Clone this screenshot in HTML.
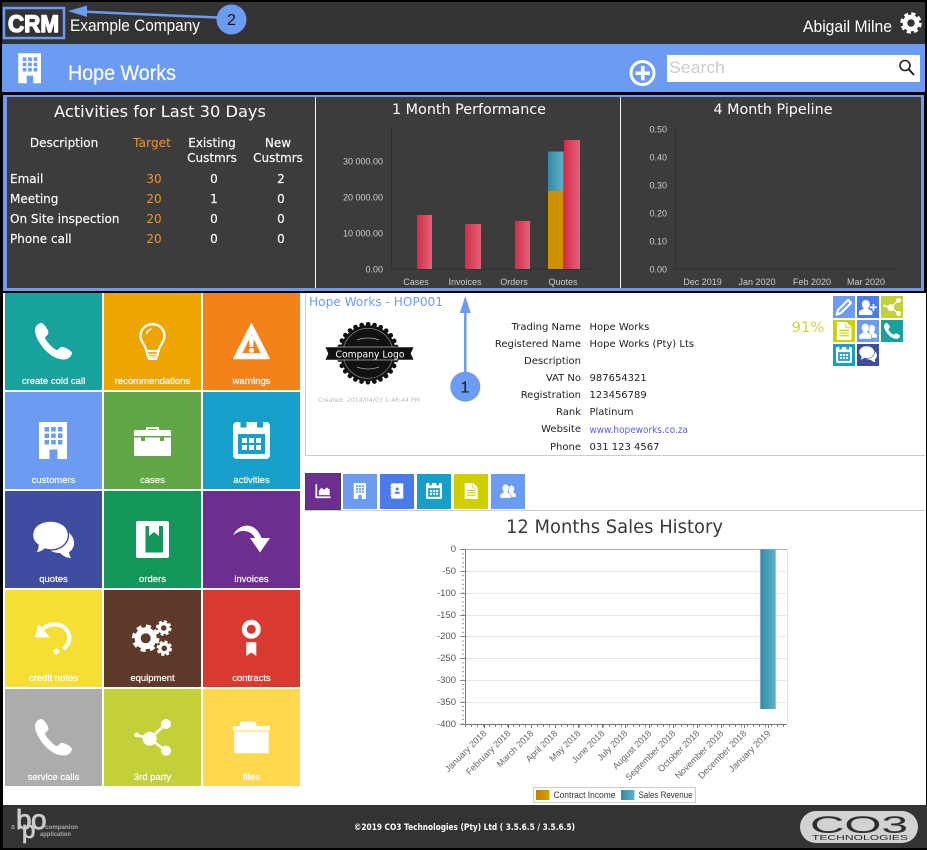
<!DOCTYPE html>
<html><head><meta charset="utf-8"><title>Hope Works</title>
<style>
html,body{margin:0;padding:0;background:#fff;width:927px;height:850px;overflow:hidden}
svg{display:block;position:absolute;left:0;top:0}
text{font-family:"Liberation Sans",sans-serif}
.d{font-family:"DejaVu Sans","Liberation Sans",sans-serif}
.w{fill:#fff}
.tl{font-size:9.5px;fill:#fff;text-anchor:middle;stroke:#fff;stroke-width:.2px}
.h{font-size:12px;fill:#fff;text-anchor:middle;font-family:"DejaVu Sans",sans-serif;stroke:#fff;stroke-width:.15px}
.c{font-size:9px;fill:#ccc}
.lb{font-size:10px;fill:#222;text-anchor:end;font-family:"DejaVu Sans",sans-serif}
.vl{font-size:10px;fill:#222;font-family:"DejaVu Sans",sans-serif}
.y{font-size:9.5px;fill:#555;text-anchor:end}
.m{font-size:9px;fill:#666;text-anchor:end}
</style></head><body>
<svg width="927" height="850" viewBox="0 0 927 850" xmlns="http://www.w3.org/2000/svg">
<defs>
<linearGradient id="r" x1="0" x2="1" y1="0" y2="0"><stop offset="0" stop-color="#d32c48"/><stop offset="1" stop-color="#e4637a"/></linearGradient>
<linearGradient id="t" x1="0" x2="1" y1="0" y2="0"><stop offset="0" stop-color="#338aa6"/><stop offset="1" stop-color="#5bb4c8"/></linearGradient>
<linearGradient id="g" x1="0" x2="1" y1="0" y2="0"><stop offset="0" stop-color="#bd8400"/><stop offset="1" stop-color="#dca000"/></linearGradient>

<symbol id="phone" viewBox="0 0 37 37" overflow="visible"><path fill="#fff" d="M6 0C3 .5 0 3 0 7c0 6 4 13 10 20 6 6 12 9.5 19 9.5 4 0 7.5-3 8-6.5 0-2-7-6-10-6-2 0-3.5 2.5-5 3-3 0-12-10-12-12.500 1-1.500 3.500-3 3.500-5C13.500 7 9 0 6 0Z"/></symbol>
<symbol id="bulb" viewBox="0 0 37 37" overflow="visible"><g fill="none" stroke="#fff" stroke-width="2.3"><path d="M18.5 1.2C11.5 1.2 6.5 6.5 6.5 13c0 6 4.5 8 6 15h12c1.500-7 6-9 6-15 0-6.500-5-11.800-12-11.800Z"/><path d="M13 28v3l2 5h7l2-5v-3" stroke-width="2"/><path d="M13.5 31.5h10M15 34h7" stroke-width="1.5"/><path d="M12.5 11c.5-2.500 2.500-4.500 5-5" stroke-width="1.5"/></g></symbol>
<symbol id="warn" viewBox="0 0 37 37" overflow="visible"><path fill="#fff" fill-rule="evenodd" stroke="#fff" stroke-linejoin="round" stroke-width="1.5" d="M18.5 1 36 35.500H1ZM18.500 10 8 31h21Z"/><path fill="#fff" d="M16 13h5l-.8 11h-3.400Z"/><circle cx="18.5" cy="27.500" r="2.400" fill="#fff"/></symbol>
<symbol id="bldg" viewBox="0 0 37 37" overflow="visible"><path fill="#fff" d="M4 0h28v37H22.5V27.500h-8V37H4Z"/><g fill="currentColor"><path d="M9.5 5h4.500v4.500H9.500zM16.200 5h4.500v4.500h-4.500zM23 5h4.500v4.500H23zM9.500 11.500h4.500V16H9.500zM16.200 11.500h4.500V16h-4.500zM23 11.500h4.500V16H23zM9.500 18h4.500v4.500H9.500zM16.200 18h4.500v4.500h-4.500zM23 18h4.500v4.500H23z"/></g></symbol>
<symbol id="case" viewBox="0 0 37 37" overflow="visible"><path fill="none" stroke="#fff" stroke-width="2" d="M13 9V6h11v3"/><rect y="8" width="37" height="26" rx="1.5" fill="#fff"/><path fill="currentColor" d="M0 14h37v1.500H30v3.500h-4v-3.500H11V19H7v-3.500H0Z"/></symbol>
<symbol id="cal" viewBox="0 0 37 37" overflow="visible"><rect width="37" height="37" rx="4" fill="#fff"/><g fill="currentColor"><rect x="7.5" y="0" width="6" height="5.5"/><rect x="24" y="0" width="6" height="5.5"/><rect x="5" y="12" width="27" height="20"/></g><g fill="#fff"><rect x="9" y="16" width="5" height="5"/><rect x="16" y="16" width="5" height="5"/><rect x="23" y="16" width="5" height="5"/><rect x="9" y="23" width="5" height="5"/><rect x="16" y="23" width="5" height="5"/><rect x="23" y="23" width="5" height="5"/></g></symbol>
<symbol id="chat" viewBox="0 0 37 37" overflow="visible"><path fill="#fff" d="M26 8C35 10 40 17 39 24 38 28 36 30 34 31 34 33 35 35 36 37 31 37 27 34 25 32 21 32 18 31 16 30Z"/><path fill="#fff" stroke="currentColor" stroke-width="1.4" d="M15.5 0C5 0-2.500 6-2.500 14-2.500 19 0 22 3 24 3 27 2 30 0 32 4 32 8 30 10 28 12 28.500 14 29 16 29 26 29 33.500 22 33.500 14 33.500 6 26 0 15.500 0Z"/></symbol>
<symbol id="book" viewBox="0 0 37 37" overflow="visible"><rect x="2" width="33" height="37" rx="2" fill="#fff"/><rect x="11.5" y="5" width="17.5" height="26.5" fill="currentColor"/><path fill="#fff" d="M15 5h10v10l-5-4-5 4Z"/></symbol>
<symbol id="arr" viewBox="0 0 37 37" overflow="visible"><path fill="#fff" d="M0 14.500C5 3 22-1 28.500 17H37L27 31.500 17 17h5C19 10.500 9 6 0 14.500Z"/></symbol>
<symbol id="undo" viewBox="0 0 37 37" overflow="visible"><path fill="none" stroke="#fff" stroke-width="4" d="M8 9c7-7 20-6 25 3 3 7 1 13-5 17"/><path fill="#fff" d="M3.5 4 15 17.500H0Z"/><path fill="#fff" d="M21.5 28 25 31.500 21.500 35 18 31.500Z"/></symbol>
<symbol id="gear" viewBox="0 0 37 37" overflow="visible"><circle cx="11.7" cy="18.3" r="11" fill="#fff"/><circle cx="11.7" cy="18.3" r="12" fill="none" stroke="#fff" stroke-width="3.5" stroke-dasharray="5 4.4"/><circle cx="11.7" cy="18.3" r="5" fill="currentColor"/><circle cx="29.7" cy="8" r="6" fill="#fff"/><circle cx="29.7" cy="8" r="6.5" fill="none" stroke="#fff" stroke-width="2.5" stroke-dasharray="3 2.1"/><circle cx="29.7" cy="8" r="2.8" fill="currentColor"/><circle cx="30.3" cy="28.3" r="6" fill="#fff"/><circle cx="30.3" cy="28.3" r="6.5" fill="none" stroke="#fff" stroke-width="2.5" stroke-dasharray="3 2.1"/><circle cx="30.3" cy="28.3" r="2.8" fill="currentColor"/></symbol>
<symbol id="rib" viewBox="0 0 37 37" overflow="visible"><circle cx="18.3" cy="9.3" r="7" fill="none" stroke="#fff" stroke-width="5"/><path fill="#fff" d="M13.3 22.3h10V36l-5-3.500-5 3.500Z"/></symbol>
<symbol id="share" viewBox="0 0 37 37" overflow="visible"><path stroke="#fff" stroke-width="2.5" fill="none" d="M2.7 16 15.7 19.7 32 5M15.7 19.7 32 31.7"/><circle cx="15.7" cy="19.7" r="7" fill="#fff"/><circle cx="32" cy="5" r="5" fill="#fff"/><circle cx="32" cy="31.7" r="5" fill="#fff"/><circle cx="2.7" cy="16" r="2.5" fill="#fff"/></symbol>
<symbol id="fold" viewBox="0 0 37 37" overflow="visible"><path fill="#fff" d="M7 2.7h15l2 4.300h13v4.500H0V7h7ZM1.300 12.500h34.400V34.300H1.300Z"/></symbol>
<symbol id="doc" viewBox="0 0 37 37" overflow="visible"><path fill="#fff" d="M4 0h20l10 10v27H4Z"/><path fill="currentColor" d="M23 1v10h10v1.500H21.500V1ZM9 16h20v2.500H9zM9 21.500h20V24H9zM9 27h20v2.500H9z"/></symbol>
<symbol id="users" viewBox="0 0 37 37" overflow="visible"><path fill="#fff" d="M26 6c4 0 7 3 7 7.500 0 3-1 5.500-3 7 0 2 6 3.500 7 6.500v5H26c0-5-3-7.500-6-9 1-1.500 1-3 1-4-.5-5 0-13 5-13Z"/><path fill="#fff" stroke="currentColor" stroke-width="1.2" d="M13 3c5 0 8 4 8 9 0 4-1.500 6.500-3.500 8 0 2.500 7 4 8 7.500V35H0v-7.500C1 24 8.500 22.500 8.500 20 6.500 18.500 5 16 5 12c0-5 3-9 8-9Z"/></symbol>
<symbol id="add" viewBox="0 0 37 37" overflow="visible"><path fill="#fff" d="M14 4c5 0 8 4 8 9 0 4-1.500 6.500-3.500 8 0 2.500 8 3.500 9 7.500V35H0v-6.500C1 24.500 9.500 23.500 9.500 21 7.500 19.500 6 17 6 13c0-5 3-9 8-9Z"/><path fill="#fff" d="M28 12h3.500v5.500H37V21h-5.500v5.500H28V21h-5.500v-3.500H28Z"/></symbol>
<symbol id="pen" viewBox="0 0 37 37" overflow="visible"><path fill="none" stroke="#fff" stroke-width="4.5" stroke-linejoin="round" d="M27 4 33 10 12 31 3.500 34 6 25Z"/></symbol>
<symbol id="area" viewBox="0 0 37 37" overflow="visible"><path fill="none" stroke="#fff" stroke-width="4" d="M3 3V33H36"/><path fill="#fff" d="M9 28V18l6-7 6 5 6-6 7 5v13Z"/></symbol>
<symbol id="abook" viewBox="0 0 37 37" overflow="visible"><rect x="5" y="1" width="28" height="35" rx="2" fill="#fff"/><path d="M3 7h5M3 14h5M3 21h5M3 28h5" stroke="#fff" stroke-width="2.5"/><circle cx="19" cy="14" r="3.5" fill="currentColor"/><path fill="currentColor" d="M13 25c0-4 2-5 6-5s6 1 6 5Z"/></symbol>
</defs>

<!-- base -->
<rect width="927" height="850" fill="#000"/>
<rect x="3" y="293" width="923" height="512" fill="#fff"/>
<rect x="2" y="2" width="923" height="42" fill="#333"/>
<rect x="2" y="44" width="923" height="48" fill="#6c9bf2"/>
<rect x="3" y="95" width="921" height="196" fill="#6c9bf2"/>
<rect x="7" y="97" width="914" height="191" fill="#3c3c3c"/>
<rect x="315" y="97" width="1" height="191" fill="#f5f5f5"/>
<rect x="620" y="97" width="1" height="191" fill="#f5f5f5"/>
<rect x="3" y="805" width="924" height="43" fill="#333"/>

<!-- header -->
<text x="8" y="32" font-size="24" font-weight="bold" fill="#fff" stroke="#fff" stroke-width="1.4" stroke-linejoin="round" textLength="51" lengthAdjust="spacingAndGlyphs">CRM</text>
<rect x="4" y="8" width="60" height="30" fill="none" stroke="#6c9bf2" stroke-width="2.5"/>
<text x="70" y="31" font-size="17" class="w" textLength="130" lengthAdjust="spacingAndGlyphs">Example Company</text>
<text x="803" y="32" font-size="17" class="w" textLength="89" lengthAdjust="spacingAndGlyphs">Abigail Milne</text>
<circle cx="911" cy="23" r="6" fill="none" stroke="#fff" stroke-width="4.6"/>
<circle cx="911" cy="23" r="9" fill="none" stroke="#fff" stroke-width="3.4" stroke-dasharray="4 3.07"/>

<use href="#bldg" x="15" y="53.3" width="30" height="30" color="#6c9bf2"/>
<text x="68" y="80" font-size="21" class="w" stroke="#fff" stroke-width=".2" textLength="108" lengthAdjust="spacingAndGlyphs">Hope Works</text>
<circle cx="642.5" cy="73" r="11.5" fill="none" stroke="#fff" stroke-width="3"/>
<path d="M641 66h3.500v5.500H650V75h-5.500v5.500H641V75h-5.500v-3.500H641Z" fill="#fff"/>
<rect x="667" y="55" width="253" height="27" fill="#fff"/>
<text x="669" y="73" font-size="17" fill="#ccc" textLength="56" lengthAdjust="spacingAndGlyphs">Search</text>
<circle cx="905" cy="65.5" r="5" fill="none" stroke="#222" stroke-width="1.6"/>
<path d="M908.5 69 914 75" stroke="#222" stroke-width="2"/>

<!-- activities -->
<text x="160" y="117" font-size="16" fill="#fff" text-anchor="middle" class="d" textLength="212" lengthAdjust="spacingAndGlyphs">Activities for Last 30 Days</text>
<text x="64" y="147" class="h">Description</text>
<text x="152" y="147" class="h" style="fill:#f7931e;stroke:none" textLength="38" lengthAdjust="spacingAndGlyphs">Target</text>
<text x="212" y="147" class="h">Existing</text><text x="212" y="162" class="h">Custmrs</text>
<text x="278" y="147" class="h">New</text><text x="278" y="162" class="h">Custmrs</text>
<text x="10" y="183" class="h" style="text-anchor:start">Email</text>
<text x="10" y="203" class="h" style="text-anchor:start">Meeting</text>
<text x="10" y="223" class="h" style="text-anchor:start">On Site inspection</text>
<text x="10" y="243" class="h" style="text-anchor:start">Phone call</text>
<text x="154" y="183" class="h" style="fill:#f7931e;stroke:none">30</text><text x="214" y="183" class="h">0</text><text x="281" y="183" class="h">2</text>
<text x="154" y="203" class="h" style="fill:#f7931e;stroke:none">20</text><text x="214" y="203" class="h">1</text><text x="281" y="203" class="h">0</text>
<text x="154" y="223" class="h" style="fill:#f7931e;stroke:none">20</text><text x="214" y="223" class="h">0</text><text x="281" y="223" class="h">0</text>
<text x="154" y="243" class="h" style="fill:#f7931e;stroke:none">20</text><text x="214" y="243" class="h">0</text><text x="281" y="243" class="h">0</text>

<!-- 1 month -->
<text x="469" y="114" font-size="14.5" fill="#fff" text-anchor="middle" class="d" textLength="154" lengthAdjust="spacingAndGlyphs">1 Month Performance</text>
<path d="M391.5 161.500H590M391.500 197H590M391.500 233H590" stroke="#373737" fill="none"/>
<path d="M391.5 128V269H590" stroke="#2e2e2e" fill="none"/>
<text x="383" y="164.500" class="c" text-anchor="end">30 000.00</text><text x="383" y="200.500" class="c" text-anchor="end">20 000.00</text><text x="383" y="236.500" class="c" text-anchor="end">10 000.00</text><text x="383" y="272.500" class="c" text-anchor="end">0.00</text>
<rect x="417" y="215" width="15" height="54" fill="url(#r)"/>
<rect x="465" y="224" width="16" height="45" fill="url(#r)"/>
<rect x="515" y="221" width="15" height="48" fill="url(#r)"/>
<rect x="548" y="191" width="15.5" height="78" fill="#cc9200"/>
<rect x="548" y="151.5" width="15.5" height="39.5" fill="url(#t)"/>
<rect x="564" y="140" width="16" height="129" fill="url(#r)"/>
<text x="416" y="285" class="c" text-anchor="middle">Cases</text><text x="465" y="285" class="c" text-anchor="middle">Invoices</text><text x="514" y="285" class="c" text-anchor="middle">Orders</text><text x="563" y="285" class="c" text-anchor="middle">Quotes</text>

<!-- 4 month -->
<text x="773" y="114" font-size="14.5" fill="#fff" text-anchor="middle" class="d" textLength="119" lengthAdjust="spacingAndGlyphs">4 Month Pipeline</text>
<path d="M675.5 129H889M675.500 157H889M675.500 185H889M675.500 213H889M675.500 241H889" stroke="#373737" fill="none"/>
<path d="M675.5 129V269H895" stroke="#2e2e2e" fill="none"/>
<text x="667" y="132.500" class="c" text-anchor="end">0.50</text><text x="667" y="188.500" class="c" text-anchor="end">0.30</text><text x="667" y="160.500" class="c" text-anchor="end">0.40</text><text x="667" y="216.500" class="c" text-anchor="end">0.20</text><text x="667" y="244.500" class="c" text-anchor="end">0.10</text><text x="667" y="272.500" class="c" text-anchor="end">0.00</text>
<text x="702.5" y="285" class="c" text-anchor="middle">Dec 2019</text><text x="757" y="285" class="c" text-anchor="middle">Jan 2020</text><text x="812" y="285" class="c" text-anchor="middle">Feb 2020</text><text x="866" y="285" class="c" text-anchor="middle">Mar 2020</text>

<!-- tiles -->
<rect x="5" y="293" width="97" height="97" fill="#17a29e"/><rect x="104" y="293" width="97" height="97" fill="#eda600"/><rect x="203" y="293" width="97" height="97" fill="#f2831b"/>
<rect x="5" y="392" width="97" height="97" fill="#6c9bf2"/><rect x="104" y="392" width="97" height="97" fill="#62a745"/><rect x="203" y="392" width="97" height="97" fill="#179fc9"/>
<rect x="5" y="491" width="97" height="97" fill="#3e4d9f"/><rect x="104" y="491" width="97" height="97" fill="#12965a"/><rect x="203" y="491" width="97" height="97" fill="#6c2f91"/>
<rect x="5" y="590" width="97" height="97" fill="#f6df35"/><rect x="104" y="590" width="97" height="97" fill="#5f3a2a"/><rect x="203" y="590" width="97" height="97" fill="#d93a30"/>
<rect x="5" y="689" width="97" height="97" fill="#acacac"/><rect x="104" y="689" width="97" height="97" fill="#c3d03a"/><rect x="203" y="689" width="97" height="97" fill="#ffd84d"/>

<use href="#phone" x="35" y="323" width="37" height="37"/>
<use href="#bulb" x="134" y="323" width="37" height="37"/>
<use href="#warn" x="233" y="323" width="37" height="37" color="#f2831b"/>
<use href="#bldg" x="35" y="422" width="37" height="37" color="#6c9bf2"/>
<use href="#case" x="134" y="422" width="37" height="37" color="#62a745"/>
<use href="#cal" x="233" y="422" width="37" height="37" color="#179fc9"/>
<use href="#chat" x="35" y="521" width="37" height="37" color="#3e4d9f"/>
<use href="#book" x="134" y="521" width="37" height="37" color="#12965a"/>
<use href="#arr" x="233" y="521" width="37" height="37"/>
<use href="#undo" x="35" y="620" width="37" height="37"/>
<use href="#gear" x="134" y="620" width="37" height="37" color="#5f3a2a"/>
<use href="#rib" x="233" y="620" width="37" height="37"/>
<use href="#phone" x="35" y="719" width="37" height="37"/>
<use href="#share" x="134" y="719" width="37" height="37"/>
<use href="#fold" x="233" y="719" width="37" height="37"/>

<text x="53.5" y="384" class="tl">create cold call</text><text x="152.5" y="384" class="tl">recommendations</text><text x="251.5" y="384" class="tl">warnings</text>
<text x="53.5" y="483" class="tl">customers</text><text x="152.5" y="483" class="tl">cases</text><text x="251.5" y="483" class="tl">activities</text>
<text x="53.5" y="582" class="tl">quotes</text><text x="152.5" y="582" class="tl">orders</text><text x="251.5" y="582" class="tl">invoices</text>
<text x="53.5" y="681" class="tl">credit notes</text><text x="152.5" y="681" class="tl">equipment</text><text x="251.5" y="681" class="tl">contracts</text>
<text x="53.5" y="780" class="tl">service calls</text><text x="152.5" y="780" class="tl">3rd party</text><text x="251.5" y="780" class="tl">files</text>

<!-- card -->
<path d="M305.5 293V455.500H925" fill="none" stroke="#ccc"/>
<text x="309" y="306" font-size="12" fill="#6c9bf2" class="d" textLength="134" lengthAdjust="spacingAndGlyphs">Hope Works - HOP001</text>
<circle cx="368" cy="353.3" r="28" fill="#111"/>
<circle cx="368" cy="353.3" r="29" fill="none" stroke="#111" stroke-width="4.6" stroke-linecap="round" stroke-dasharray=".1 6.4"/>
<circle cx="368" cy="353.3" r="25" fill="none" stroke="#999" stroke-width=".6"/>
<path d="M325 347h89l-3 6.500 3 6.500h-89l3-6.500Z" fill="#111" stroke="#fff" stroke-width=".6"/>
<path d="M357 340q11 -4 22 0M357 367q11 4 22 0" stroke="#aaa" fill="none" stroke-width=".8"/>
<text x="370" y="357.500" font-size="10" fill="#fff" text-anchor="middle" class="d" textLength="69" lengthAdjust="spacingAndGlyphs">Company Logo</text>
<text x="318" y="402" font-size="6" fill="#bbb" class="d" textLength="102" lengthAdjust="spacingAndGlyphs">Created: 2014/04/03 1:46:44 PM</text>

<text x="581" y="330" class="lb">Trading Name</text><text x="589.5" y="330" class="vl">Hope Works</text>
<text x="581" y="347" class="lb">Registered Name</text><text x="589.5" y="347" class="vl">Hope Works (Pty) Lts</text>
<text x="581" y="364" class="lb">Description</text>
<text x="581" y="381" class="lb">VAT No</text><text x="589.5" y="381" class="vl">987654321</text>
<text x="581" y="398" class="lb">Registration</text><text x="589.5" y="398" class="vl">123456789</text>
<text x="581" y="415" class="lb">Rank</text><text x="589.5" y="415" class="vl">Platinum</text>
<text x="581" y="432" class="lb">Website</text><text x="589.5" y="433" class="vl" style="fill:#5a5af0" textLength="98.500" lengthAdjust="spacingAndGlyphs">www.hopeworks.co.za</text>
<text x="581" y="450" class="lb">Phone</text><text x="589.5" y="450" class="vl">031 123 4567</text>
<text x="791.5" y="332" font-size="14" fill="#d8d038" class="d" textLength="33" lengthAdjust="spacingAndGlyphs">91%</text>

<rect x="833" y="296" width="22" height="22" fill="#6c9bf2"/><rect x="857" y="296" width="22" height="22" fill="#4a7be8"/><rect x="881" y="296" width="22" height="22" fill="#c3d03a"/>
<rect x="833" y="320" width="22" height="22" fill="#cfcf00"/><rect x="857" y="320" width="22" height="22" fill="#6c9bf2"/><rect x="881" y="320" width="22" height="22" fill="#17a29e"/>
<rect x="833" y="344" width="22" height="22" fill="#179fc9"/><rect x="857" y="344" width="22" height="22" fill="#3e4d9f"/>
<use href="#pen" x="835" y="298" width="18" height="18"/>
<use href="#add" x="859" y="298" width="18" height="18"/>
<use href="#share" x="883" y="298" width="18" height="18"/>
<use href="#doc" x="835" y="322" width="18" height="18" color="#cfcf00"/>
<use href="#users" x="859" y="322" width="18" height="18" color="#6c9bf2"/>
<use href="#phone" x="884" y="323" width="16" height="16"/>
<use href="#cal" x="836" y="347" width="16" height="16" color="#179fc9"/>
<use href="#chat" x="860" y="346" width="16" height="16" color="#3e4d9f"/>

<!-- tabs -->
<rect x="305.5" y="473.5" width="35" height="36" fill="#6c2f91" stroke="#444"/>
<rect x="343" y="474" width="34" height="35" fill="#6c9bf2"/><rect x="380" y="474" width="34" height="35" fill="#4a7be8"/><rect x="417" y="474" width="34" height="35" fill="#179fc9"/><rect x="454" y="474" width="34" height="35" fill="#cfcf00"/><rect x="491" y="474" width="34" height="35" fill="#6c9bf2"/>
<path d="M305 510.5H925" stroke="#ccc"/>
<use href="#area" x="315" y="483" width="16" height="16"/>
<use href="#bldg" x="352" y="483" width="16" height="16" color="#6c9bf2"/>
<use href="#abook" x="389" y="483" width="16" height="16" color="#4a7be8"/>
<use href="#cal" x="426" y="483" width="16" height="16" color="#179fc9"/>
<use href="#doc" x="463" y="483" width="16" height="16" color="#cfcf00"/>
<use href="#users" x="500" y="483" width="16" height="16" color="#6c9bf2"/>

<!-- sales chart -->
<text x="614.5" y="533" font-size="19" fill="#3a3a3a" text-anchor="middle" class="d" textLength="217" lengthAdjust="spacingAndGlyphs">12 Months Sales History</text>
<path d="M465 571.5H787M465 593.500H787M465 615.500H787M465 636.500H787M465 658.500H787M465 680.500H787M465 702.500H787" stroke="#e6e6e6"/>
<path d="M787.5 549V724" stroke="#e6e6e6"/>
<path d="M465 549.5H787" stroke="#aaa"/>
<path d="M465.5 549V725M465 724.500H787" stroke="#777"/>
<path d="M465 726H787" stroke="#888" stroke-width="2" stroke-dasharray="1 5"/>
<path d="M463 549V724" stroke="#999" stroke-width="2" stroke-dasharray="1 3.360"/>
<path d="M484.5 725v3M508.500 725v3M531.500 725v3M555.500 725v3M578.500 725v3M602.500 725v3M625.500 725v3M649.500 725v3M673.500 725v3M697.500 725v3M721.500 725v3M744.500 725v3M768.500 725v3" stroke="#777"/>
<path d="M460 549.5h5M460 571.500h5M460 593.500h5M460 615.500h5M460 636.500h5M460 658.500h5M460 680.500h5M460 702.500h5M460 724.500h5" stroke="#888"/>
<rect x="760.3" y="549.5" width="15.4" height="159.5" fill="url(#t)"/>
<text x="456" y="552" class="y">0</text><text x="456" y="574" class="y">-50</text><text x="456" y="596" class="y">-100</text><text x="456" y="618" class="y">-150</text><text x="456" y="639" class="y">-200</text><text x="456" y="661" class="y">-250</text><text x="456" y="683" class="y">-300</text><text x="456" y="705" class="y">-350</text><text x="456" y="727" class="y">-400</text>
<text class="m" transform="translate(487 734) rotate(-45)">January 2018</text>
<text class="m" transform="translate(511 734) rotate(-45)">February 2018</text>
<text class="m" transform="translate(534 734) rotate(-45)">March 2018</text>
<text class="m" transform="translate(558 734) rotate(-45)">April 2018</text>
<text class="m" transform="translate(581 734) rotate(-45)">May 2018</text>
<text class="m" transform="translate(605 734) rotate(-45)">June 2018</text>
<text class="m" transform="translate(628 734) rotate(-45)">July 2018</text>
<text class="m" transform="translate(652 734) rotate(-45)">August 2018</text>
<text class="m" transform="translate(676 734) rotate(-45)">September 2018</text>
<text class="m" transform="translate(700 734) rotate(-45)">October 2018</text>
<text class="m" transform="translate(724 734) rotate(-45)">November 2018</text>
<text class="m" transform="translate(747 734) rotate(-45)">December 2018</text>
<text class="m" transform="translate(771 734) rotate(-45)">January 2019</text>
<rect x="533.5" y="787.5" width="162" height="15" fill="#fff" stroke="#ccc"/>
<rect x="536" y="790" width="13.5" height="10" fill="url(#g)"/>
<rect x="621" y="790" width="13.5" height="10" fill="url(#t)"/>
<text x="553.5" y="798" font-size="9" fill="#333" textLength="62" lengthAdjust="spacingAndGlyphs">Contract Income</text>
<text x="638.5" y="798" font-size="9" fill="#333" textLength="54" lengthAdjust="spacingAndGlyphs">Sales Revenue</text>

<!-- annotations -->
<path d="M218 17.5 86 11.800" stroke="#6c9bf2" stroke-width="2.5"/>
<path d="M68 11 87 5.500V17Z" fill="#6c9bf2"/>
<circle cx="231.5" cy="19.5" r="15" fill="#6c9bf2"/>
<text x="231.5" y="25" font-size="16" fill="#111" text-anchor="middle">2</text>
<path d="M465.3 372V312" stroke="#6c9bf2" stroke-width="2.5"/>
<path d="M465.3 296 470.800 313H459.800Z" fill="#6c9bf2"/>
<circle cx="465.3" cy="386.7" r="15" fill="#6c9bf2"/>
<text x="465" y="392.5" font-size="16" fill="#111" text-anchor="middle">1</text>

<!-- footer -->
<text x="354" y="830" font-size="9" font-weight="bold" fill="#fff" class="d" textLength="221" lengthAdjust="spacingAndGlyphs">©2019 CO3 Technologies (Pty) Ltd ( 3.5.6.5 / 3.5.6.5)</text>
<text x="11" y="829" font-size="7" fill="#bbb">a</text>
<text x="16" y="829" font-size="28" fill="#ccc" stroke="#ccc" stroke-width=".8">b</text>
<text x="31" y="829" font-size="28" fill="#ccc" stroke="#ccc" stroke-width=".8">o</text>
<text x="22" y="838" font-size="24" fill="#ccc" stroke="#ccc" stroke-width=".8">p</text>
<text x="45" y="829" font-size="6.5" font-weight="bold" fill="#aaa" textLength="33" lengthAdjust="spacingAndGlyphs">companion</text>
<text x="40" y="836" font-size="6.5" font-weight="bold" fill="#aaa" textLength="31" lengthAdjust="spacingAndGlyphs">application</text>
<rect x="800" y="811" width="118" height="32" rx="16" fill="#d2d2d2"/>
<text x="810" y="833" font-size="24" fill="#2d2d2d" textLength="98" lengthAdjust="spacingAndGlyphs">CO3</text>
<text x="812" y="840" font-size="7" fill="#2d2d2d" textLength="96" lengthAdjust="spacingAndGlyphs">TECHNOLOGIES</text>
</svg>
</body></html>
